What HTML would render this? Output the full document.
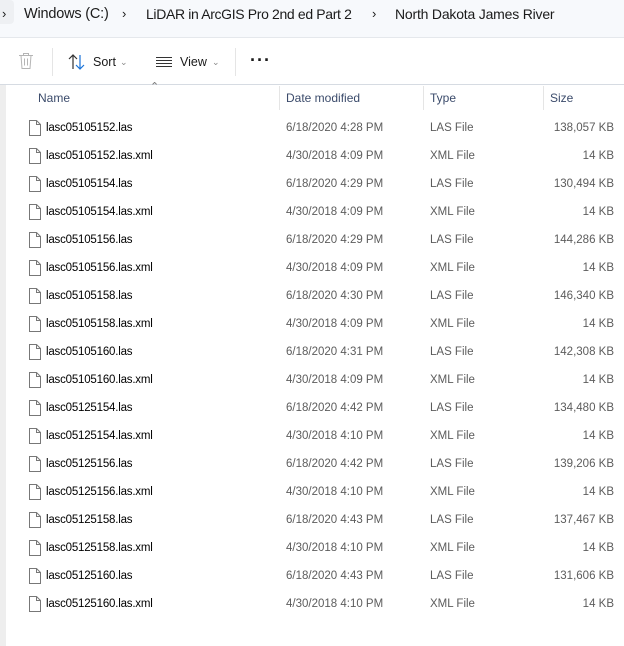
<!DOCTYPE html><html><head><style>
body{margin:0;width:624px;height:646px;overflow:hidden;background:#fff;font-family:"Liberation Sans",sans-serif;font-size:12px;color:#1a1a1a;position:relative}
.top{position:absolute;left:0;top:0;width:624px;height:37px;background:#f7f9fc;border-bottom:1px solid #e5e8ec}
.top span{position:absolute;top:6px;font-size:14px;color:#1b1b1b;letter-spacing:-0.2px;white-space:nowrap}
.tb{position:absolute;top:38px;left:0;width:624px;height:46px;border-bottom:1px solid #d6dbe2;background:#fff}
.tb span{position:absolute;top:17px;font-size:12.5px}
.sep{position:absolute;top:10px;width:1px;height:28px;background:#e5e5e5}
.strip{position:absolute;left:0;top:85px;width:6px;height:561px;background:#eeeeee}
.hd{position:absolute;top:91px;font-size:12px;color:#3b4b6b}
.cs{position:absolute;top:86px;width:1px;height:24px;background:#e5e5e5}
.r{position:absolute;left:0;width:624px;height:28px;font-size:11.5px}
.r span{position:absolute;top:8px}
.r .n{left:46px;color:#000;letter-spacing:-0.2px}.r .d{left:286px;color:#5c5c5c}.r .t{left:430px;color:#5c5c5c}.r .s{right:10px;color:#5c5c5c}
.r svg{position:absolute;left:29px;top:6px}
</style></head><body>
<div class="top">
<div style="position:absolute;left:0;top:0;width:14px;height:24px;background:#eef0f3;border-radius:0 4px 4px 0"></div>
<span style="left:2px;font-size:13px">›</span>
<span style="left:24px;font-size:14.5px">Windows (C:)</span>
<span style="left:122px;font-size:13px">›</span>
<span style="left:146px;letter-spacing:-0.35px">LiDAR in ArcGIS Pro 2nd ed Part 2</span>
<span style="left:372px;font-size:13px">›</span>
<span style="left:395px">North Dakota James River</span>
</div>
<div class="tb">
<svg style="position:absolute;left:18px;top:14px" width="16" height="18" viewBox="0 0 16 18" fill="none" stroke="#b5b5b5" stroke-width="1"><path d="M1 3.5h14M5.5 3.5V1.5h5v2M3 3.5l1 13h8l1-13M6.5 6.5v7M9.5 6.5v7"/></svg>
<div class="sep" style="left:52px"></div>
<svg style="position:absolute;left:68px;top:16px" width="18" height="16" viewBox="0 0 18 16" fill="none" stroke-width="1.2"><path d="M5 15V1M1 5l4-4 4 4" stroke="#333"/><path d="M12 1v14M8 11l4 4 4-4" stroke="#1a73d9"/></svg>
<span style="left:93px">Sort</span><span style="left:120px;font-size:9px;top:19px;color:#888">⌄</span>
<svg style="position:absolute;left:156px;top:18px" width="16" height="12" viewBox="0 0 16 12" stroke="#333" stroke-width="1"><path d="M0 1.5h16M0 4.5h16M0 7.5h16M0 10.5h16"/></svg>
<span style="left:180px">View</span><span style="left:212px;font-size:9px;top:19px;color:#888">⌄</span>
<div class="sep" style="left:235px"></div>
<span style="left:250px;top:12px;font-size:18px;font-weight:bold;letter-spacing:1px">···</span>
</div>
<div class="strip"></div>
<span style="position:absolute;left:150px;top:80px;font-size:11px;color:#777">⌃</span>
<span class="hd" style="left:38px">Name</span>
<div class="cs" style="left:279px"></div><span class="hd" style="left:286px">Date modified</span>
<div class="cs" style="left:423px"></div><span class="hd" style="left:430px">Type</span>
<div class="cs" style="left:543px"></div><span class="hd" style="left:550px">Size</span>
<div id="rows"></div>
<script>
const d=[["lasc05105152.las","6/18/2020 4:28 PM","LAS File","138,057 KB"],["lasc05105152.las.xml","4/30/2018 4:09 PM","XML File","14 KB"],["lasc05105154.las","6/18/2020 4:29 PM","LAS File","130,494 KB"],["lasc05105154.las.xml","4/30/2018 4:09 PM","XML File","14 KB"],["lasc05105156.las","6/18/2020 4:29 PM","LAS File","144,286 KB"],["lasc05105156.las.xml","4/30/2018 4:09 PM","XML File","14 KB"],["lasc05105158.las","6/18/2020 4:30 PM","LAS File","146,340 KB"],["lasc05105158.las.xml","4/30/2018 4:09 PM","XML File","14 KB"],["lasc05105160.las","6/18/2020 4:31 PM","LAS File","142,308 KB"],["lasc05105160.las.xml","4/30/2018 4:09 PM","XML File","14 KB"],["lasc05125154.las","6/18/2020 4:42 PM","LAS File","134,480 KB"],["lasc05125154.las.xml","4/30/2018 4:10 PM","XML File","14 KB"],["lasc05125156.las","6/18/2020 4:42 PM","LAS File","139,206 KB"],["lasc05125156.las.xml","4/30/2018 4:10 PM","XML File","14 KB"],["lasc05125158.las","6/18/2020 4:43 PM","LAS File","137,467 KB"],["lasc05125158.las.xml","4/30/2018 4:10 PM","XML File","14 KB"],["lasc05125160.las","6/18/2020 4:43 PM","LAS File","131,606 KB"],["lasc05125160.las.xml","4/30/2018 4:10 PM","XML File","14 KB"]];
let h="";d.forEach((r,i)=>{h+=`<div class="r" style="top:${114+i*28}px"><svg width="12" height="16" viewBox="0 0 12 16" fill="#fff" stroke="#777" stroke-width="1"><path d="M.5.5h7l4 4v11H.5z M7.5.5v4h4"/></svg><span class="n">${r[0]}</span><span class="d">${r[1]}</span><span class="t">${r[2]}</span><span class="s">${r[3]}</span></div>`});
document.getElementById("rows").innerHTML=h;
</script>
</body></html>
